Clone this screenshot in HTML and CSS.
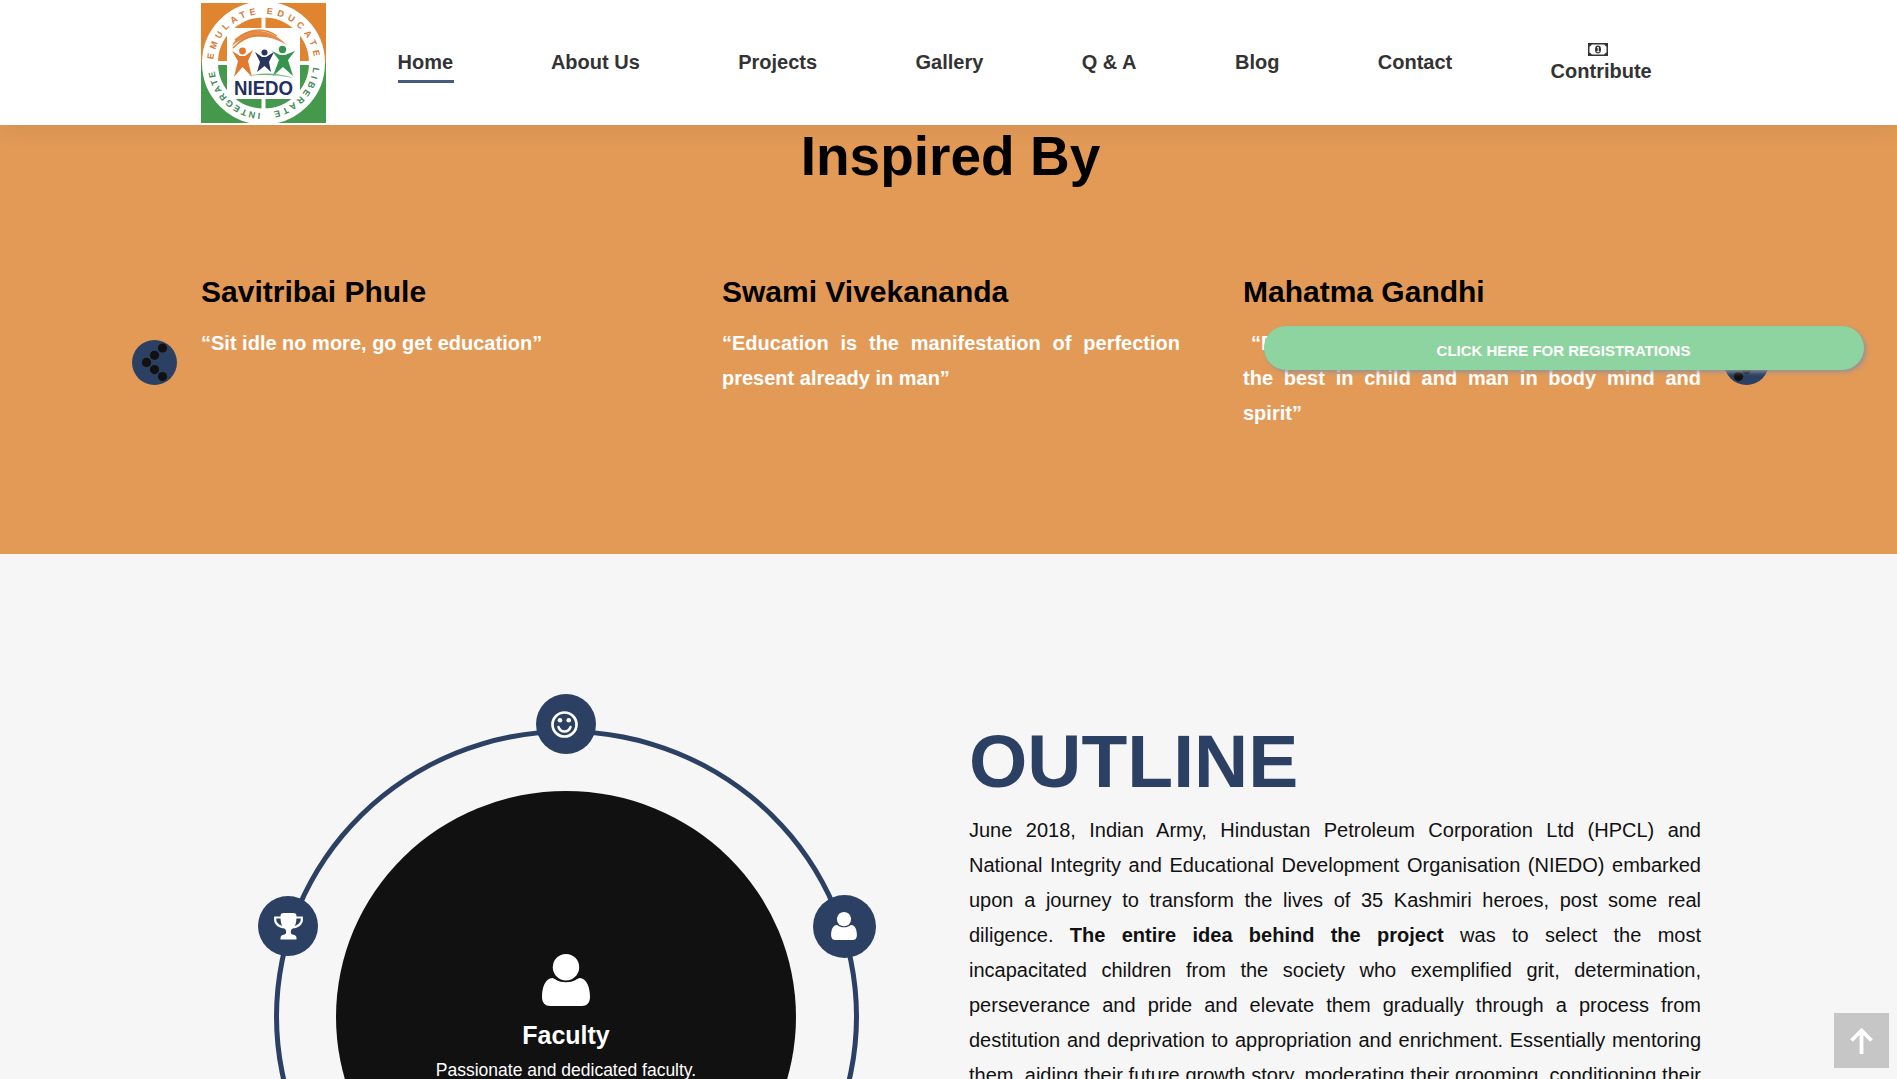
FILE: index.html
```html
<!DOCTYPE html>
<html lang="en">
<head>
<meta charset="utf-8">
<title>NIEDO</title>
<link rel="stylesheet" href="styles.css">
</head>
<body>
<svg class="defs" aria-hidden="true">
  <symbol id="user" viewBox="0 0 48 52"><circle cx="24" cy="13.200" r="13.200"/><path d="M10.500 24 C3 24 0 34 0 43 C0 49 3.500 52 8 52 H40 C44.500 52 48 49 48 43 C48 34 45 24 37.500 24 C36 24 32 28.300 24 28.300 C16 28.300 12 24 10.500 24Z"/></symbol>
  <symbol id="dots" viewBox="0 0 45 45"><circle cx="30.500" cy="8" r="4.600"/><circle cx="22.500" cy="15.300" r="4.600"/><circle cx="14.500" cy="22.400" r="4.600"/><circle cx="22.500" cy="29.600" r="4.600"/><circle cx="30.500" cy="36.600" r="4.600"/></symbol>
</svg>
<header class="header">
  <svg class="logo" viewBox="0 0 125 120">
    <defs>
      <path id="r1" d="M8.500 56 A54 54 0 0 1 58 7"/>
      <path id="r2" d="M66 7 A54 54 0 0 1 117 55"/>
      <path id="r3" d="M116 65 A54 54 0 0 1 69 113"/>
      <path id="r4" d="M59 114 A54 54 0 0 1 9 64"/>
    </defs>
    <rect width="125" height="60" fill="#e0842f"/>
    <rect y="60" width="125" height="60" fill="#45994d"/>
    <circle cx="62.500" cy="60" r="53.500" fill="none" stroke="#fff" stroke-width="16"/>
    <path d="M62.500 0V120M1 60H124" stroke="#fff" stroke-width="4"/>
    <rect x="26" y="25" width="73" height="71" fill="#fff"/>
    <g class="logo-ring" fill="#d67b35">
      <text dy="4"><textPath href="#r1" textLength="72">EMULATE</textPath></text>
      <text dy="4"><textPath href="#r2" textLength="74">EDUCATE</textPath></text>
    </g>
    <g class="logo-ring" fill="#408a56">
      <text dy="4"><textPath href="#r3" textLength="68">LIBERATE</textPath></text>
      <text dy="4"><textPath href="#r4" textLength="72">INTEGRATE</textPath></text>
    </g>
    <path d="M31 43C38 26 64 20 86 42C66 30 45 31 31 43Z" fill="#e48b48"/>
    <path d="M34 37C49 24 64 25 76 33M32 45C42 34 54 31 66 33" fill="none" stroke="#df8238" stroke-width="1.500"/>
    <path d="M31 48L39 53H44L52 47L47 58L51 74L41.500 64L33 74L37 58Z" fill="#e1792f"/>
    <circle cx="41.500" cy="48" r="3.400" fill="#e1792f"/>
    <path d="M54 49L61 54H65L73 49L68 59L70 69L63.500 63L56 69L59 59Z" fill="#28355f"/>
    <circle cx="63.500" cy="49.500" r="3" fill="#28355f"/>
    <path d="M71 48L79 52H84L94 48L87 57L92 73L82 64L72 73L78 57Z" fill="#36934d"/>
    <circle cx="81.500" cy="46.500" r="3.700" fill="#36934d"/>
    <path d="M47 73Q69 67 93 75Q70 70 47 73" fill="#72b778"/>
    <text x="33" y="91.500" class="logo-name" textLength="59" lengthAdjust="spacingAndGlyphs">NIEDO</text>
  </svg>
  <nav class="nav">
    <a class="active">Home</a><a>About Us</a><a>Projects</a><a>Gallery</a><a>Q &amp; A</a><a>Blog</a><a>Contact</a>
    <a class="contribute">
      <svg width="20" height="13" viewBox="0 0 20 13"><rect x=".75" y=".75" width="18.500" height="11.500" fill="none" stroke="#333" stroke-width="1.500"/><path d="M0 0H4A3.500 3.500 0 0 1 0 3.500ZM20 0V3.500A3.500 3.500 0 0 1 16 0ZM0 13V9.500A3.500 3.500 0 0 1 4 13ZM20 13H16A3.500 3.500 0 0 1 20 9.500Z" fill="#333"/><ellipse cx="10" cy="6.500" rx="3" ry="4" fill="#333"/><path d="M9 5L10.200 4V8.500M8.700 8.700H11.500" fill="none" stroke="#fff"/></svg>
      <span>Contribute</span>
    </a>
  </nav>
</header>
<section class="inspired">
  <h2>Inspired By</h2>
  <div class="slider">
    <svg class="arrow"><use href="#dots"/></svg>
    <div class="quotes">
      <article><h3>Savitribai Phule</h3><p>“Sit idle no more, go get education”</p></article>
      <article><h3>Swami Vivekananda</h3><p>“Education is the manifestation of perfection present already in man”</p></article>
      <article><h3>Mahatma Gandhi</h3><p>&nbsp;“By education I mean an all round drawing of the best in child and man in body mind and spirit”</p></article>
    </div>
    <svg class="arrow next"><use href="#dots"/></svg>
  </div>
</section>
<section class="outline">
  <div class="wheel">
    <div class="disc">
      <svg class="disc-icon"><use href="#user"/></svg>
      <h4>Faculty</h4>
      <p>Passionate and dedicated faculty.</p>
    </div>
    <span class="node smile"><svg width="27" height="27" viewBox="0 0 27 27"><circle cx="13.500" cy="13.500" r="12" fill="none" stroke="#fff" stroke-width="2.700"/><circle cx="9" cy="9.200" r="2.300"/><circle cx="17.700" cy="9.200" r="2.300"/><path d="M7.500 16C9.500 22 17.500 22 19.500 16" fill="none" stroke="#fff" stroke-width="2.400" stroke-linecap="round"/></svg></span>
    <span class="node trophy"><svg width="29" height="27" viewBox="0 0 29 27"><path d="M7 4.500H1.200V7C1.200 11 6 14.500 11 14.500M22 4.500H27.800V7C27.800 11 23 14.500 18 14.500" fill="none" stroke="#fff" stroke-width="2.200"/><path d="M6.500 3Q6.500 0 9.500 0H19.500Q22.500 0 22.500 3C22.500 10 21.500 13 18.500 15.500C16 17.500 16.500 21 18.500 21.500C21.500 22 22.500 23 22.500 25V26.500H6.500V25C6.500 23 7.500 22 10.500 21.500C12.500 21 13 17.500 10.500 15.500C7.500 13 6.500 10 6.500 3Z"/></svg></span>
    <span class="node person"><svg width="26" height="28"><use href="#user"/></svg></span>
  </div>
  <div class="copy">
    <h1>OUTLINE</h1>
    <p>June 2018, Indian Army, Hindustan Petroleum Corporation Ltd (HPCL) and National Integrity and Educational Development Organisation (NIEDO) embarked upon a journey to transform the lives of 35 Kashmiri heroes, post some real diligence. <b>The entire idea behind the project</b> was to select the most incapacitated children from the society who exemplified grit, determination, perseverance and pride and elevate them gradually through a process from destitution and deprivation to appropriation and enrichment. Essentially mentoring them, aiding their future growth story, moderating their grooming, conditioning their</p>
  </div>
</section>
<a class="register">CLICK HERE FOR REGISTRATIONS</a>
<a class="to-top"><svg width="23" height="26" viewBox="0 0 23 26"><path d="M11.500 26V2M1.500 12.500L11.500 2.500L21.500 12.500" fill="none" stroke="#fff" stroke-width="3.800"/></svg></a>
</body>
</html>
```
FILE: styles.css
```css
* { box-sizing: border-box; margin: 0; padding: 0; }
body { height: 1079px; overflow: hidden; font: 20px/35px "Liberation Sans", Arial, sans-serif; color: #111; background: #f6f6f6; }
.defs { position: absolute; width: 0; height: 0; }
.header { position: relative; z-index: 2; height: 125px; padding: 3px 0 0 201px; display: flex; align-items: flex-start; background: #fff; box-shadow: 0 0 25px rgba(0,0,0,.1); }
.logo { width: 125px; height: 120px; flex: none; }
.logo-ring { font: bold 9px "Liberation Sans", sans-serif; }
.logo-name { font: bold 20px "Liberation Sans", sans-serif; fill: #222f60; }
.nav { display: flex; align-items: center; gap: 98.4px; height: 118px; margin-left: 71.5px; color: #333; font-weight: bold; line-height: 22px; white-space: nowrap; }
.nav a { display: block; }
.nav .active { height: 42px; padding-top: 10px; border-bottom: 3px solid #475a80; margin-right: -1.5px; width: 56.5px; }
.contribute svg { display: block; margin: 0 auto 4px; position: relative; left: -3px; }
.inspired { height: 429px; background: #e39a57; color: #000; }
.inspired h2 { padding-left: 4px; text-align: center; font-size: 55px; line-height: 62px; }
.slider { display: flex; padding: 83px 0 0 132px; }
.arrow { width: 45px; height: 45px; margin-top: 70px; flex: none; border-radius: 50%; background: #2b4063; fill: #111; }
.next { transform: scaleX(-1); margin-left: 23px; }
.quotes { width: 1500px; margin: 1px 0 0 24px; display: grid; grid-template-columns: repeat(3, 458px); gap: 63px; }
.quotes h3 { font-size: 30px; line-height: 42px; margin-bottom: 13px; }
.quotes p { color: #fff; font-weight: bold; text-align: justify; }
.outline { display: flex; height: 525px; padding-left: 274px; overflow: hidden; }
.wheel { position: relative; flex: none; width: 585px; height: 575px; margin-top: 175px; border: 5px solid #2b4063; border-radius: 50%; display: flex; justify-content: center; padding-right: 1px; }
.disc { width: 460px; height: 452px; margin-top: 57px; border-radius: 50%; background: #111; color: #fff; text-align: center; padding-top: 163px; }
.disc-icon { display: block; width: 48px; height: 52px; margin: 0 auto; fill: #fff; }
.disc h4 { font-size: 25px; line-height: 30px; margin-top: 14px; }
.disc p { font-size: 17.5px; line-height: 30px; margin-top: 5px; }
.node { position: absolute; width: 60px; height: 60px; border-radius: 50%; background: #2b4063; fill: #fff; display: flex; align-items: center; justify-content: center; }
.smile { left: 257px; top: -40px; padding-right: 4px; }
.trophy { left: -21px; top: 162px; }
.person { left: 533.5px; top: 160.5px; width: 63px; height: 63px; }
.copy { width: 732px; margin: 162px 0 0 110px; }
.copy h1 { font-size: 75px; line-height: 90px; color: #2b4063; }
.copy p { text-align: justify; text-align-last: justify; margin-top: 7px; }
.register { position: absolute; z-index: 3; left: 1264px; top: 326px; width: 600px; height: 44px; padding: 4px 1px 0 0; border-radius: 22px; background: #8dd4a0; color: #fff; font-size: 15px; line-height: 41px; font-weight: bold; text-align: center; box-shadow: 2px 2px 4px #8f939b; }
.to-top { position: absolute; z-index: 3; left: 1834px; top: 1013px; width: 55px; height: 55px; display: flex; align-items: center; justify-content: center; background: #c6c6c6; }
```
